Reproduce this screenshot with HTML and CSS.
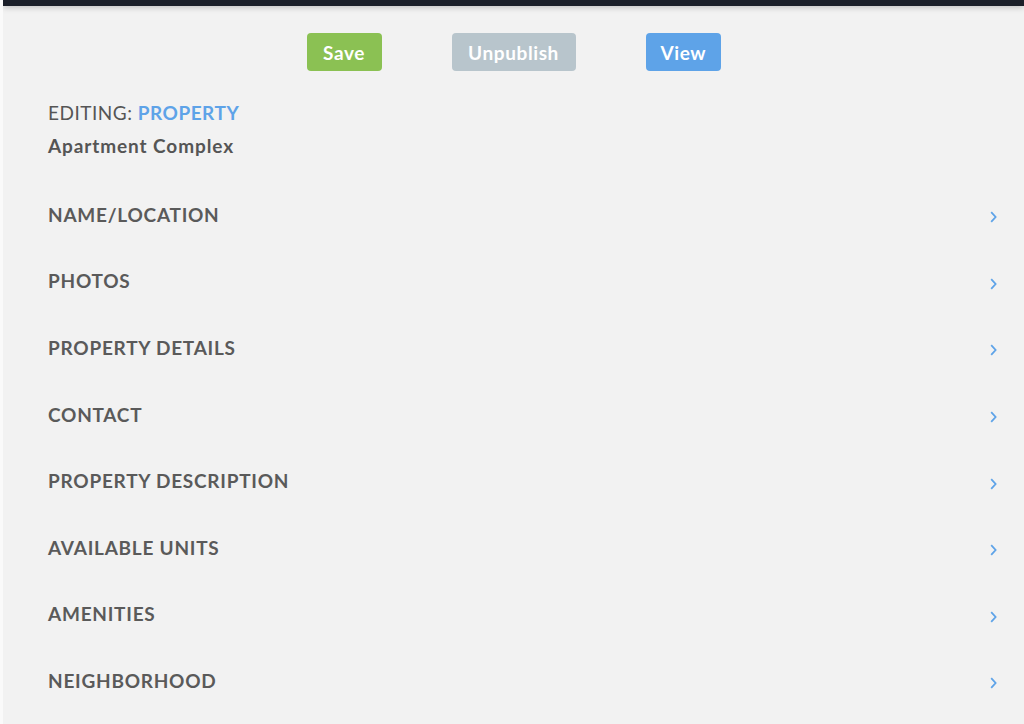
FILE: index.html
```html
<!DOCTYPE html>
<html>
<head>
<meta charset="utf-8">
<link rel="stylesheet" href="styles.css">
</head>
<body>
<div class="topbar"></div>
<div class="page">
  <div class="actions">
    <button class="btn btn-save">Save</button>
    <button class="btn btn-unpublish">Unpublish</button>
    <button class="btn btn-view">View</button>
  </div>
  <div class="heading">
    <div class="editing">EDITING: <span class="kind">PROPERTY</span></div>
    <div class="subtitle">Apartment Complex</div>
  </div>
  <ul class="menu">
    <li class="item"><span>NAME/LOCATION</span><svg class="chev" viewBox="0 0 7 12"><path d="M1.2 1.2 L5.6 6 L1.2 10.8" /></svg></li>
    <li class="item"><span>PHOTOS</span><svg class="chev" viewBox="0 0 7 12"><path d="M1.2 1.2 L5.6 6 L1.2 10.8" /></svg></li>
    <li class="item"><span>PROPERTY DETAILS</span><svg class="chev" viewBox="0 0 7 12"><path d="M1.2 1.2 L5.6 6 L1.2 10.8" /></svg></li>
    <li class="item"><span>CONTACT</span><svg class="chev" viewBox="0 0 7 12"><path d="M1.2 1.2 L5.6 6 L1.2 10.8" /></svg></li>
    <li class="item"><span>PROPERTY DESCRIPTION</span><svg class="chev" viewBox="0 0 7 12"><path d="M1.2 1.2 L5.6 6 L1.2 10.8" /></svg></li>
    <li class="item"><span>AVAILABLE UNITS</span><svg class="chev" viewBox="0 0 7 12"><path d="M1.2 1.2 L5.6 6 L1.2 10.8" /></svg></li>
    <li class="item"><span>AMENITIES</span><svg class="chev" viewBox="0 0 7 12"><path d="M1.2 1.2 L5.6 6 L1.2 10.8" /></svg></li>
    <li class="item"><span>NEIGHBORHOOD</span><svg class="chev" viewBox="0 0 7 12"><path d="M1.2 1.2 L5.6 6 L1.2 10.8" /></svg></li>
  </ul>
</div>
</body>
</html>
```

FILE: styles.css
```css
html, body {
  margin: 0;
  padding: 0;
  height: 100%;
  overflow: hidden;
}
body {
  background: #f2f2f2;
  font-family: Lato, "Liberation Sans", sans-serif;
  border-left: 3px solid #fafafa;
  box-sizing: border-box;
}
.topbar {
  height: 6px;
  background: #1b1f29;
  box-shadow: 0 1px 6px rgba(0,0,0,0.25);
  position: relative;
}
.page {
  padding: 27px 24px 0 45px;
}
.actions {
  display: flex;
  justify-content: center;
  gap: 70px;
  margin-left: -45px;
  margin-right: -24px;
}
.btn {
  height: 38px;
  border: none;
  border-radius: 4px;
  color: #fff;
  font-family: Lato, "Liberation Sans", sans-serif;
  font-weight: 700;
  font-size: 19px;
  letter-spacing: 0.6px;
  padding: 0 15px;
  cursor: pointer;
}
.btn-save { background: #8bc153; width: 75px; }
.btn-unpublish { background: #b8c5cc; width: 124px; }
.btn-view { background: #5ea3e8; width: 75px; }
.heading {
  margin-top: 30px;
}
.editing {
  font-size: 19px;
  color: #555;
  line-height: 24px;
  letter-spacing: 0.5px;
}
.kind {
  color: #5ea3e8;
  font-weight: 700;
}
.subtitle {
  margin-top: 9px;
  font-size: 19px;
  font-weight: 700;
  color: #555;
  line-height: 24px;
  letter-spacing: 0.9px;
}
.menu {
  list-style: none;
  margin: 23px 0 0 0;
  padding: 0;
}
.item {
  height: 66.6px;
  display: flex;
  align-items: center;
  justify-content: space-between;
  font-size: 19px;
  font-weight: 700;
  color: #5a5a5a;
  letter-spacing: 0.75px;
}
.chev {
  width: 7px;
  height: 12px;
  fill: none;
  stroke: #5ea3e8;
  stroke-width: 1.8;
  margin-right: 3px;
  margin-top: 6px;
}
```
